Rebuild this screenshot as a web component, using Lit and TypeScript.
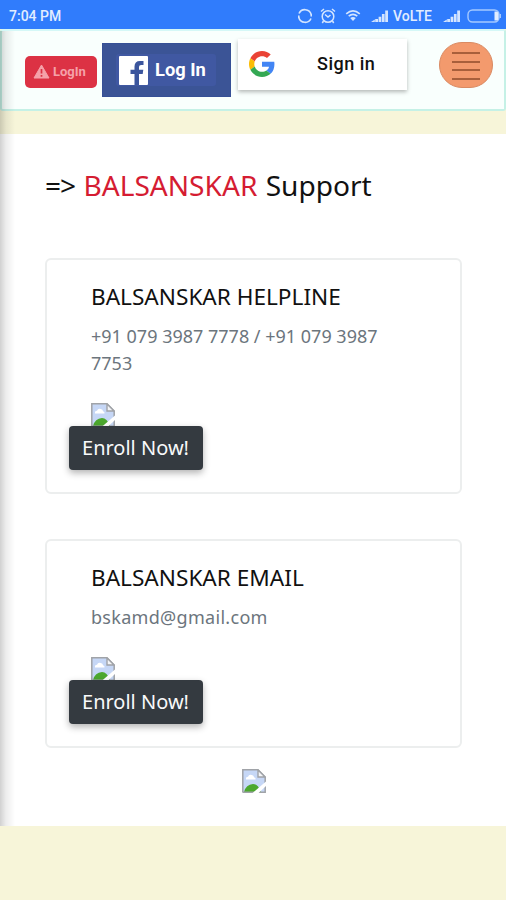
import { LitElement, html, css, svg } from "lit";
import { customElement, property } from "lit/decorators.js";

@customElement("broken-image")
class BrokenImage extends LitElement {
  static styles = css`
    :host { display: block; width: 24px; height: 24px; }
    svg { display: block; }
  `;
  render() {
    return html`<svg width="24" height="24" viewBox="0 0 24 24">
      <path d="M1 1H16L23 8V23H1Z" fill="#c6d7f6" />
      <path d="M4 10.5Q3.5 8 6 7.8Q7 5 9.8 6Q12 6.4 12 8.3Q14 8.6 13.5 10.5Z" fill="#fff" />
      <path d="M2 23Q4 15.5 11 15Q16 15 19 23Z" fill="#4ca82e" />
      <path d="M.8 23.5V.8H16L23.2 8V23.2H.8" fill="none" stroke="#a0a3a8" stroke-width="1.5" />
      <path d="M16 1V8H23Z" fill="#f4f5f7" stroke="#a0a3a8" stroke-width="1.4" />
      <path d="M24.5 12V16.5L16 24.5H10Z" fill="#fff" />
    </svg>`;
  }
}

@customElement("contact-card")
class ContactCard extends LitElement {
  @property() heading = "";
  @property() detail = "";
  static styles = css`
    :host {
      display: block; box-sizing: border-box; border: 2px solid #eceeee; border-radius: 6px;
      padding: 22px 44px 22px 44px; background: #fff;
    }
    .heading { margin: 0; font-size: 22.6px; font-weight: 400; line-height: 30px; color: #111; }
    .detail { margin: 11px 0 26px; font-size: 18px; line-height: 27px; color: #6c757d; }
    .enroll {
      position: relative; display: block; margin: -1px 0 0 -22px; width: 134px; height: 44px; padding: 0 1px 0 0;
      border: 0; border-radius: 4px; background: #343a40; color: #f8f9fa;
      font: 20px/44px "Noto Sans", sans-serif; text-align: center; white-space: nowrap;
      box-shadow: 0 3px 7px rgba(0, 0, 0, .3);
    }
    :host([spaced]) .detail { letter-spacing: .3px; }
  `;
  render() {
    return html`
      <h4 class="heading">${this.heading}</h4>
      <p class="detail">${this.detail}</p>
      <broken-image></broken-image>
      <button class="enroll">Enroll Now!</button>`;
  }
}

const signal = svg`<path d="M0 13L3.8 10.5V13ZM4.2 10H7V13H4.2ZM7.6 7.8H10.3V13H7.6ZM10.9 5H13.6V13H10.9ZM14.2 1.5H17V13H14.2Z" fill="#d4e5ff"/>`;

@customElement("app-root")
class AppRoot extends LitElement {
  static styles = css`
    :host {
      display: block; position: relative; width: 506px; height: 900px; overflow: hidden;
      background: #f7f5d9; font-family: "Noto Sans", sans-serif;
    }
    svg { display: block; flex: none; }
    .status {
      display: flex; align-items: center; height: 29px; box-sizing: border-box; padding: 2px 5px 0 9px;
      background: #307cfc; color: #e2edff; font: 500 14px/20px Roboto, sans-serif;
    }
    .time { flex: 1; }
    .ring { margin-right: 7px; }
    .alarm { margin-right: 9px; }
    .wifi { margin-right: 10px; }
    .volte { margin: 0 9px 0 4px; width: 41px; white-space: nowrap; }
    .battery { margin-left: 6px; }
    .header {
      display: flex; align-items: flex-start; box-sizing: border-box; height: 82px; padding: 7px 11px 0 23px;
      background: #f9fffd; border: 2px solid #c5f1e6; border-top-color: #d5f8f7; border-radius: 3px;
    }
    .login {
      display: flex; align-items: center; gap: 3px; box-sizing: border-box; width: 72px; height: 32px;
      margin: 17.5px 5px 0 0; padding: 0 0 0 8px; border-radius: 5px; background: #dc3244; color: #f5a1a9;
      font: 700 13px/32px Roboto, sans-serif; white-space: nowrap;
    }
    .facebook {
      display: flex; align-items: center; box-sizing: border-box; width: 129px; height: 54px;
      margin: 5px 7px 0 0; padding: 0 14px 0 13px; background: #3b5496; border: 1px solid #365096;
    }
    .facebook-inner {
      display: flex; align-items: center; gap: 7px; width: 101px; height: 32px; padding-left: 3px;
      border-radius: 3px; background: #4058a2; color: #fff; font: 700 18.3px/32px Roboto, sans-serif;
      white-space: nowrap;
    }
    .google {
      display: flex; align-items: center; box-sizing: border-box; width: 169px; height: 51px;
      margin-top: 1px; padding: 0 0 2px 11px; background: #fff; color: #111;
      font: 500 18px/24px Roboto, sans-serif; letter-spacing: .5px; white-space: nowrap;
      box-shadow: 0 2px 4px rgba(0, 0, 0, .28);
    }
    .google-label { margin-left: 42px; }
    .menu {
      display: flex; flex-direction: column; align-items: center; justify-content: space-between;
      box-sizing: border-box; width: 54px; height: 46px; margin: 4px 0 0 auto; padding: 9px 0 7px;
      border: 1px solid #d98a62; border-radius: 23px; background: #f39a6d;
    }
    .line { width: 28px; height: 2px; background: #a85f3b; }
    .page { box-sizing: border-box; height: 692px; margin-top: 23px; padding: 32px 44px 0 45px; background: #fff; }
    .title { margin: 0 0 53px; font-size: 28.1px; line-height: 39px; font-weight: 400; color: #111; }
    .arrow { letter-spacing: -1px; margin-right: 1px; }
    .brand { color: #d51c32; margin-right: 1px; }
    .card + .card { margin-top: 45px; }
    .footer-image { margin: 21px auto 0; }
    .drawer-shadow {
      position: absolute; left: 0; top: 31px; width: 15px; height: 795px; pointer-events: none;
      background: linear-gradient(90deg, rgba(0, 0, 0, .18), rgba(0, 0, 0, .07) 40%, transparent);
    }
  `;
  render() {
    return html`
      <div class="status">
        <span class="time">7:04 PM</span>
        <svg class="ring" width="16" height="16" viewBox="0 0 16 16" fill="none" stroke="#d4e5ff" stroke-width="1.6">
          <path d="M2 5.5A6.5 6.5 0 0 1 14.2 6.5M14 10.5A6.5 6.5 0 0 1 1.8 9.5" /><path d="M14.2 6V8.5M1.8 7.5V10" />
        </svg>
        <svg class="alarm" width="16" height="16" viewBox="0 0 16 16" fill="none" stroke="#d4e5ff" stroke-width="1.5">
          <circle cx="8" cy="8.5" r="5.8" /><path d="M1 3.5L4 1M12 1L15 3.5M5 6.5L8 9L10.5 7M3.5 13L2.3 15M12.5 13L13.7 15" />
        </svg>
        <svg class="wifi" width="16" height="13" viewBox="0 0 16 13" fill="none" stroke="#d4e5ff" stroke-width="1.6">
          <path d="M1.2 4.8Q8 -1 14.8 4.8M3.7 7.2Q8 3.5 12.3 7.2" /><path d="M5.2 9Q8 6.8 10.8 9L8 12Z" fill="#d4e5ff" stroke="none" />
        </svg>
        <svg width="18" height="14" viewBox="0 0 18 14">${signal}</svg>
        <span class="volte">VoLTE</span>
        <svg width="18" height="14" viewBox="0 0 18 14">${signal}</svg>
        <svg class="battery" width="34" height="14" viewBox="0 0 34 14">
          <rect x="1" y="1" width="31" height="12" rx="4.5" fill="none" stroke="#a4c9ff" stroke-width="1.4" />
          <path d="M27.5 2.5H30Q31.5 3 31.5 5V9Q31.5 11 30 11.5H27.5Z" fill="#e2edff" /><path d="M33.3 5V9" stroke="#c4dcff" />
        </svg>
      </div>
      <div class="header">
        <div class="login">
          <svg width="17" height="15" viewBox="0 0 17 15">
            <path d="M8.5 1L16 14H1Z" fill="#f5a1a9" stroke="#f5a1a9" stroke-linejoin="round" />
            <path d="M8.5 5V9.5M8.5 11V12.7" stroke="#dc3244" stroke-width="1.7" />
          </svg>
          <span>LogIn</span>
        </div>
        <div class="facebook">
          <div class="facebook-inner">
            <svg width="29" height="29" viewBox="0 0 29 29">
              <rect width="29" height="29" rx="1" fill="#fff" />
              <path d="M15.5 29V18H11.5V13.7H15.5V10.6Q15.5 5 21 5H24.5V9H22.1Q20 9 20 11V13.7H24.3L23.7 18H20V29Z" fill="#3b559d" />
            </svg>
            <span>Log In</span>
          </div>
        </div>
        <div class="google">
          <svg width="26" height="26" viewBox="0 0 48 48">
            <path fill="#EA4335" d="M24 9.5c3.54 0 6.71 1.22 9.21 3.6l6.85-6.85C35.9 2.38 30.47 0 24 0 14.62 0 6.51 5.38 2.56 13.22l7.98 6.19C12.43 13.72 17.74 9.5 24 9.5z" />
            <path fill="#4285F4" d="M46.98 24.55c0-1.57-.15-3.09-.38-4.55H24v9.02h12.94c-.58 2.96-2.26 5.48-4.78 7.18l7.73 6c4.51-4.18 7.09-10.36 7.09-17.65z" />
            <path fill="#FBBC05" d="M10.53 28.59c-.48-1.45-.76-2.99-.76-4.59s.27-3.14.76-4.59l-7.98-6.19C.92 16.46 0 20.12 0 24c0 3.88.92 7.54 2.56 10.78l7.97-6.19z" />
            <path fill="#34A853" d="M24 48c6.48 0 11.93-2.13 15.89-5.81l-7.73-6c-2.15 1.45-4.92 2.3-8.16 2.3-6.26 0-11.57-4.22-13.47-9.91l-7.98 6.19C6.51 42.62 14.62 48 24 48z" />
          </svg>
          <span class="google-label">Sign in</span>
        </div>
        <div class="menu">
          ${[0, 1, 2, 3].map(() => html`<div class="line"></div>`)}
        </div>
      </div>
      <div class="page">
        <h2 class="title"><span class="arrow">=&gt;</span> <span class="brand">BALSANSKAR</span> Support</h2>
        <contact-card class="card" heading="BALSANSKAR HELPLINE" detail="+91 079 3987 7778 / +91 079 3987 7753"></contact-card>
        <contact-card class="card" spaced heading="BALSANSKAR EMAIL" detail="bskamd@gmail.com"></contact-card>
        <broken-image class="footer-image"></broken-image>
      </div>
      <div class="drawer-shadow"></div>`;
  }
}
